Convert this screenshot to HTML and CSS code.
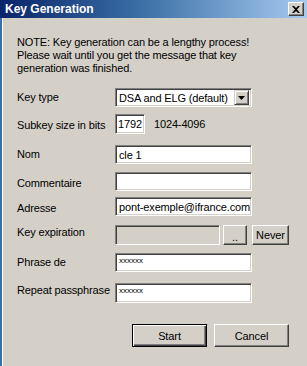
FILE: index.html
```html
<!DOCTYPE html>
<html>
<head>
<meta charset="utf-8">
<link rel="stylesheet" href="styles.css">
</head>
<body>
<div class="window">
  <div class="titlebar">
    <span class="title">Key Generation</span>
    <span class="close"><svg width="8" height="7" viewBox="0 0 8 7"><path d="M0 0h2l2 2 2-2h2L5 3.5 8 7H6L4 5 2 7H0l3-3.5z" fill="#000"/></svg></span>
  </div>
  <div class="content">
    <p class="note">NOTE: Key generation can be a lengthy process!<br>Please wait until you get the message that key<br>generation was finished.</p>
    <div class="form">
      <div class="row">
        <label class="lbl lbl-mid">Key type</label>
        <div class="field select"><span class="select-text">DSA and ELG (default)</span><span class="arrow"><svg width="7" height="4" viewBox="0 0 7 4"><path d="M0 0h7L3.5 4z" fill="#000"/></svg></span></div>
      </div>
      <div class="row">
        <label class="lbl lbl-lo">Subkey size in bits</label>
        <div class="field input short">1792</div>
        <span class="hint">1024-4096</span>
      </div>
      <div class="row">
        <label class="lbl lbl-mid">Nom</label>
        <div class="field input">cle 1</div>
      </div>
      <div class="row">
        <label class="lbl lbl-lo">Commentaire</label>
        <div class="field input"></div>
      </div>
      <div class="row">
        <label class="lbl lbl-lo">Adresse</label>
        <div class="field input">pont-exemple@ifrance.com</div>
      </div>
      <div class="row">
        <label class="lbl lbl-hi">Key expiration</label>
        <div class="field input disabled"></div>
        <button class="btn small dots">..</button>
        <button class="btn small never">Never</button>
      </div>
      <div class="row">
        <label class="lbl lbl-mid">Phrase de</label>
        <div class="field input pw">xxxxxx</div>
      </div>
      <div class="row">
        <label class="lbl lbl-hi">Repeat passphrase</label>
        <div class="field input pw tall">xxxxxx</div>
      </div>
    </div>
    <div class="actions">
      <button class="btn big default">Start</button>
      <button class="btn big">Cancel</button>
    </div>
  </div>
</div>
</body>
</html>
```
FILE: styles.css
```css
html, body {
  margin: 0;
  padding: 0;
}
body {
  width: 307px;
  height: 366px;
  overflow: hidden;
  background: #d4d0c8;
  font-family: "Liberation Sans", Arial, sans-serif;
  font-size: 11px;
  letter-spacing: -0.15px;
  color: #000;
}
.window {
  width: 307px;
  height: 366px;
  display: flex;
  flex-direction: column;
}
.titlebar {
  height: 18px;
  background: linear-gradient(to right, #0a246a 0%, #3a6ea5 45%, #a6caf0 100%);
  display: flex;
  align-items: center;
  justify-content: space-between;
  padding: 0 3px 0 5px;
  flex: none;
}
.title {
  color: #fff;
  font-weight: bold;
  font-size: 12px;
  font-family: "Liberation Sans", Arial, sans-serif;
  letter-spacing: 0;
}
.close {
  width: 14px;
  height: 12px;
  background: #d4d0c8;
  border: 1px solid;
  border-color: #fff #404040 #404040 #fff;
  box-shadow: inset -1px -1px #808080;
  display: flex;
  align-items: center;
  justify-content: center;
}
.content {
  flex: 1;
  border-left: 2px solid #3a6ea5;
  padding: 18px 0 0 15px;
  box-shadow: inset 1px 0 #fff;
}
.note {
  margin: 0;
  line-height: 13px;
}
.form {
  margin-top: 13px;
  display: grid;
  grid-template-rows: 26px 31px 27px 25px 28px 28px 30px 20px;
}
.row {
  display: flex;
  align-items: flex-start;
}
.lbl {
  width: 98px;
  flex: none;
  line-height: 13px;
}
.lbl-hi { padding-top: 1px; }
.lbl-mid { padding-top: 3px; }
.lbl-lo { padding-top: 5px; }
.field {
  box-sizing: border-box;
  height: 19px;
  width: 137px;
  background: #fff;
  border: 1px solid;
  border-color: #808080 #fff #fff #808080;
  box-shadow: inset 1px 1px #404040, inset -1px -1px #d4d0c8;
  padding: 2px 3px;
  line-height: 14px;
  white-space: nowrap;
  overflow: hidden;
}
.input.short {
  width: 30px;
  height: 20px;
  padding: 2px 2px;
}
.hint {
  margin-left: 9px;
  padding-top: 4px;
}
.input.disabled {
  width: 105px;
  height: 20px;
  background: #d4d0c8;
}
.input.pw {
  font-size: 8px;
  line-height: 9px;
  padding: 2px 3px;
  letter-spacing: 0;
}
.input.tall { height: 20px; }
.select {
  display: flex;
  align-items: center;
  justify-content: space-between;
  padding: 2px;
}
.select-text {
  padding-left: 1px;
}
.arrow {
  box-sizing: border-box;
  width: 15px;
  height: 15px;
  background: #d4d0c8;
  border: 1px solid;
  border-color: #d4d0c8 #404040 #404040 #d4d0c8;
  box-shadow: inset 1px 1px #fff, inset -1px -1px #808080;
  display: flex;
  align-items: center;
  justify-content: center;
}
.btn {
  box-sizing: border-box;
  background: #d4d0c8;
  border: 1px solid;
  border-color: #fff #404040 #404040 #fff;
  box-shadow: inset -1px -1px #808080;
  font-family: "Liberation Sans", Arial, sans-serif;
  font-size: 11px;
  letter-spacing: -0.1px;
  color: #000;
  padding: 0;
  margin: 0;
}
.btn.small {
  height: 20px;
}
.btn.dots {
  width: 24px;
  margin-left: 3px;
  padding-top: 4px;
}
.btn.never {
  width: 37px;
  margin-left: 5px;
}
.actions {
  display: flex;
  gap: 7px;
  margin-left: 115px;
  margin-top: 21px;
}
.btn.big {
  width: 75px;
  height: 23px;
}
.btn.default {
  border: 1px solid #000;
  box-shadow: inset 1px 1px #fff, inset -1px -1px #404040, inset -2px -2px #808080;
}
```
